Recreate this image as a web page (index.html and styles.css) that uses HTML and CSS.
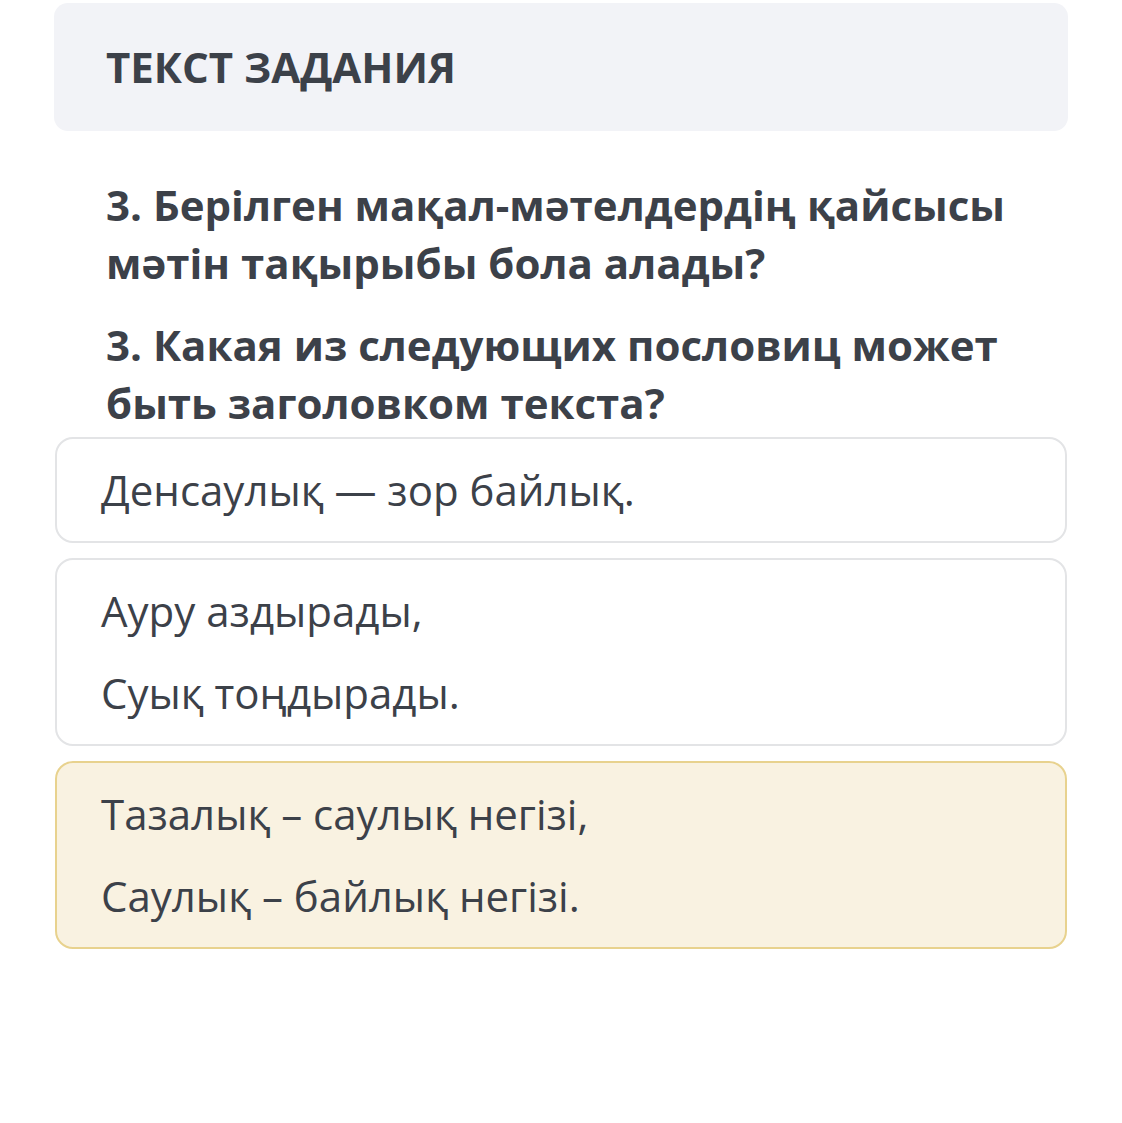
FILE: index.html
```html
<!DOCTYPE html>
<html lang="ru">
<head>
<meta charset="utf-8">
<link rel="stylesheet" href="styles.css">
</head>
<body>
<main class="page">
  <header class="task-head">
    <h1 class="task-title">ТЕКСТ ЗАДАНИЯ</h1>
  </header>
  <section class="question">
    <p>3. Берілген мақал-мәтелдердің қайсысы мәтін тақырыбы бола алады?</p>
    <p>3. Какая из следующих пословиц может быть заголовком текста?</p>
  </section>
  <ul class="options">
    <li class="option"><p>Денсаулық — зор байлық.</p></li>
    <li class="option"><p>Ауру аздырады,</p><p>Суық тоңдырады.</p></li>
    <li class="option option--selected"><p>Тазалық – саулық негізі,</p><p>Саулық – байлық негізі.</p></li>
  </ul>
</main>
</body>
</html>
```

FILE: styles.css
```css
html, body {
  margin: 0;
  padding: 0;
  background: #ffffff;
}
body {
  font-family: "Open Sans", "Noto Sans", sans-serif;
  color: #3c4149;
}
.page {
  width: 1014px;
  margin-left: 54px;
  padding-top: 3px;
}
.task-head {
  height: 128px;
  box-sizing: border-box;
  background: #f2f3f7;
  border-radius: 14px;
  padding-left: 52px;
  display: flex;
  align-items: center;
}
.task-title {
  margin: 0;
  font-size: 42px;
  font-weight: 700;
  line-height: 58px;
  color: #3c4149;
}
.question {
  padding: 45px 52px 0 52px;
}
.question p {
  margin: 0 0 24px 0;
  font-size: 42px;
  font-weight: 700;
  line-height: 58px;
}
.question p:last-child {
  margin-bottom: 5px;
}
.options {
  list-style: none;
  margin: 0;
  padding: 0;
  display: flex;
  flex-direction: column;
  gap: 15px;
}
.option {
  margin: 0 1px;
  border: 2px solid #e3e4e6;
  border-radius: 18px;
  padding: 22px 44px 22px 44px;
  display: flex;
  flex-direction: column;
  gap: 24px;
  background: #ffffff;
}
.option p {
  margin: 0;
  font-size: 42px;
  font-weight: 400;
  line-height: 58px;
}
.option--selected {
  background: #f9f2e1;
  border-color: #e8d28e;
}
```
